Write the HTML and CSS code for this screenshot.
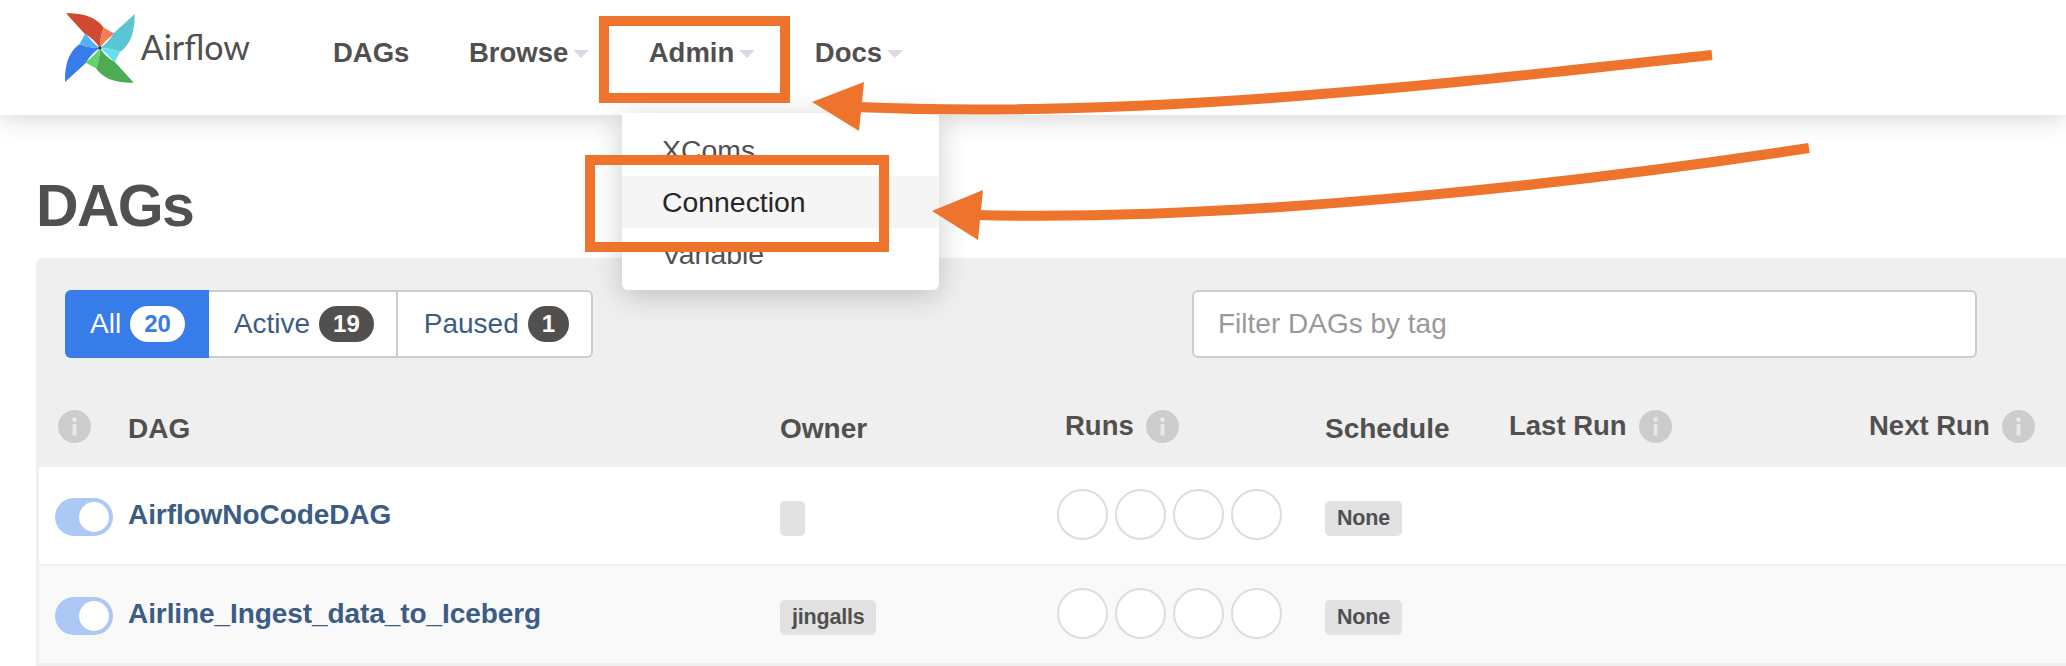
FILE: index.html
```html
<!DOCTYPE html>
<html lang="en">
<head>
  <meta charset="UTF-8" />
  <meta name="viewport" content="width=device-width, initial-scale=1" />
  <title>DAGs - Airflow</title>
  <link rel="stylesheet" href="styles.css">
</head>
<body>
  <svg class="defs" width="0" height="0">
    <symbol id="info" viewBox="0 0 33 33">
      <circle cx="16.5" cy="16.5" r="16.5" fill="#ccc" />
      <circle cx="16.5" cy="9.5" r="2.4" fill="#e8e8e8" />
      <rect x="14.6" y="14" width="3.8" height="11.5" fill="#e8e8e8" />
    </symbol>
  </svg>

  <header class="navbar">
    <a class="brand" href="#">
      <svg class="brand-logo" width="72" height="72" viewBox="0 0 72 72">
        <g>
          <path fill="#d14a2f" d="M1 0C15 0 31 2 40 15C37 22 36 30 36 36C32 30 27 25 20 21Z" />
          <path fill="#ef7e5e" d="M40 15L51 21C45 26 39 31 36 36C36 30 37 22 40 15Z" />
        </g>
        <g transform="rotate(90 36 36)">
          <path fill="#5ac6d3" d="M1 0C15 0 31 2 40 15C37 22 36 30 36 36C32 30 27 25 20 21Z" />
          <path fill="#66e0ee" d="M40 15L51 21C45 26 39 31 36 36C36 30 37 22 40 15Z" />
        </g>
        <g transform="rotate(180 36 36)">
          <path fill="#4dab55" d="M1 0C15 0 31 2 40 15C37 22 36 30 36 36C32 30 27 25 20 21Z" />
          <path fill="#63d46c" d="M40 15L51 21C45 26 39 31 36 36C36 30 37 22 40 15Z" />
        </g>
        <g transform="rotate(270 36 36)">
          <path fill="#377ce8" d="M1 0C15 0 31 2 40 15C37 22 36 30 36 36C32 30 27 25 20 21Z" />
          <path fill="#54b0f8" d="M40 15L51 21C45 26 39 31 36 36C36 30 37 22 40 15Z" />
        </g>
        <circle cx="36" cy="36" r="1.5" fill="#333" />
      </svg>
      <span class="brand-name">Airflow</span>
    </a>
    <nav class="nav-links">
      <a class="nav-link" href="#">DAGs</a>
      <a class="nav-link" href="#">Browse<span class="caret"></span></a>
      <a class="nav-link" href="#">Admin<span class="caret"></span></a>
      <a class="nav-link" href="#">Docs<span class="caret"></span></a>
    </nav>
  </header>

  <ul class="dropdown">
    <li class="dropdown-item">XComs</li>
    <li class="dropdown-item hover">Connection</li>
    <li class="dropdown-item">Variable</li>
  </ul>

  <h1 class="page-title">DAGs</h1>

  <main class="panel">
    <div class="toolbar">
      <div class="btn-group">
        <a class="btn btn-active" href="#">All <span class="badge badge-light">20</span></a>
        <a class="btn" href="#">Active <span class="badge">19</span></a>
        <a class="btn" href="#">Paused <span class="badge">1</span></a>
      </div>
      <div class="tag-filter">Filter DAGs by tag</div>
    </div>

    <div class="table-row table-head">
      <div class="head-icon"><svg class="info" width="33" height="33"><use href="#info" /></svg></div>
      <div>DAG</div>
      <div>Owner</div>
      <div class="head-runs raised">Runs <svg class="info" width="33" height="33"><use href="#info" /></svg></div>
      <div>Schedule</div>
      <div class="raised">Last Run <svg class="info" width="33" height="33"><use href="#info" /></svg></div>
      <div class="raised">Next Run <svg class="info" width="33" height="33"><use href="#info" /></svg></div>
    </div>

    <div class="table-row dag-row">
      <div><span class="toggle"></span></div>
      <div><a class="dag-name" href="#">AirflowNoCodeDAG</a></div>
      <div><span class="label label-empty"></span></div>
      <div class="runs"><span class="run"></span><span class="run"></span><span class="run"></span><span class="run"></span></div>
      <div><span class="label">None</span></div>
      <div></div>
      <div></div>
    </div>

    <div class="table-row dag-row odd">
      <div><span class="toggle"></span></div>
      <div><a class="dag-name" href="#">Airline_Ingest_data_to_Iceberg</a></div>
      <div><span class="label">jingalls</span></div>
      <div class="runs"><span class="run"></span><span class="run"></span><span class="run"></span><span class="run"></span></div>
      <div><span class="label">None</span></div>
      <div></div>
      <div></div>
    </div>
  </main>

  <!-- orange callouts drawn on top of the screenshot -->
  <svg class="callouts" width="2066" height="666" viewBox="0 0 2066 666">
    <rect x="604" y="21" width="181" height="77" fill="none" stroke="#ee742e" stroke-width="10" />
    <rect x="590" y="160" width="294" height="87" fill="none" stroke="#ee742e" stroke-width="10" />
    <path d="M1712 55C1480 80 1150 120 858 107" fill="none" stroke="#ee742e" stroke-width="10" />
    <path d="M812 102L864 82L859 131Z" fill="#ee742e" />
    <path d="M1809 148C1600 180 1250 222 975 215" fill="none" stroke="#ee742e" stroke-width="10" />
    <path d="M932 211L983 190L978 240Z" fill="#ee742e" />
  </svg>
</body>
</html>
```

FILE: styles.css
```css
* {
  box-sizing: border-box;
}
html, body {
  height: 666px;
  overflow: hidden;
}
body {
  margin: 0;
  background: #fff;
  font-family: "Liberation Sans", Arial, sans-serif;
  color: #51504f;
}
a {
  color: inherit;
  text-decoration: none;
}
.defs {
  position: absolute;
}

.navbar {
  position: relative;
  z-index: 2;
  display: flex;
  height: 115px;
  padding-left: 65px;
  background: #fff;
  box-shadow: 0 4px 24px rgba(0, 0, 0, 0.16);
}
.brand {
  display: flex;
  width: 185px;
  height: 72px;
  margin-top: 12px;
  margin-right: 83px;
}
.brand-name {
  margin-left: 6px;
  font-family: Lato, sans-serif;
  font-size: 34px;
  font-weight: 400;
  line-height: 70px;
}
.nav-links {
  display: flex;
  gap: 59.5px;
  margin-top: 37px;
}
.nav-link {
  display: flex;
  height: 31px;
  font-size: 27.5px;
  font-weight: bold;
  line-height: 31px;
}
.caret {
  width: 0;
  height: 0;
  margin-top: 13px;
  margin-left: 5px;
  border-top: 8px solid #e0d6e6;
  border-left: 8px solid transparent;
  border-right: 8px solid transparent;
}

.dropdown {
  position: absolute;
  z-index: 3;
  top: 113px;
  left: 622px;
  width: 317px;
  height: 177px;
  margin: 0;
  padding: 11px 0;
  list-style: none;
  background: #fff;
  border-radius: 0 0 6px 6px;
  box-shadow: 0 6px 30px rgba(0, 0, 0, 0.2);
}
.dropdown-item {
  height: 52px;
  padding-left: 40px;
  font-size: 28.4px;
  line-height: 52px;
}
.dropdown-item.hover {
  background: #f5f5f5;
  color: #262626;
}

.page-title {
  height: 143px;
  margin: 0 0 0 36px;
  padding-top: 58px;
  font-size: 59px;
  letter-spacing: -1.7px;
  line-height: 66px;
}

.panel {
  height: 420px;
  margin-left: 36px;
  padding-left: 3px;
  background: #efefef;
  border-top-left-radius: 6px;
}
.toolbar {
  display: flex;
  gap: 600px;
  padding: 32px 0 32px 26px;
}
.btn-group {
  display: flex;
  width: 527px;
  height: 68px;
}
.btn {
  display: flex;
  align-items: center;
  gap: 9px;
  padding: 0 22px 0 25px;
  font-size: 28px;
  color: #3b5c84;
  background: #fff;
  border: 2px solid #ccc;
  border-left-width: 0;
}
.btn:last-child {
  flex: 1;
  padding-left: 26px;
  border-radius: 0 6px 6px 0;
}
.btn-active {
  padding-right: 24px;
  color: #fff;
  background: #377ce8;
  border: 0;
  border-radius: 6px 0 0 6px;
}
.badge {
  min-width: 40px;
  height: 36px;
  padding: 0 14px;
  font-size: 24px;
  font-weight: bold;
  line-height: 36px;
  text-align: center;
  color: #fff;
  background: #51504f;
  border-radius: 18px;
}
.badge-light {
  color: #377ce8;
  background: #fff;
}
.tag-filter {
  width: 785px;
  height: 68px;
  padding-left: 24px;
  font-size: 28px;
  line-height: 64px;
  color: #999;
  background: #fff;
  border: 2px solid #ccc;
  border-radius: 6px;
}

.table-row {
  display: grid;
  grid-template-columns: 89px 652px 277px 268px 184px 360px 1fr;
}
.table-head {
  height: 77px;
  padding-top: 26px;
  font-size: 28px;
  font-weight: bold;
  line-height: 26px;
}
.head-icon {
  padding-left: 19px;
  margin-top: -6px;
}
.raised {
  display: flex;
  gap: 12px;
  margin-top: -6px;
  height: 33px;
  font-size: 27.5px;
  line-height: 32px;
}
.head-runs {
  padding-left: 8px;
}
.info {
  display: block;
}
.dag-row {
  height: 99px;
  background: #fff;
  border-bottom: 2px solid #f0f0f0;
}
.dag-row.odd {
  background: #f9f9f9;
}
.toggle {
  display: block;
  position: relative;
  width: 58px;
  height: 38px;
  margin: 31px 0 0 16px;
  background: #acc8f4;
  border-radius: 19px;
}
.toggle::after {
  content: "";
  position: absolute;
  top: 4px;
  right: 4px;
  width: 30px;
  height: 30px;
  background: #fff;
  border-radius: 50%;
}
.dag-name {
  display: block;
  margin-top: 32px;
  font-size: 28px;
  font-weight: bold;
  letter-spacing: -0.08px;
  line-height: 32px;
  color: #3b5c84;
}
.label {
  display: inline-block;
  height: 35px;
  margin-top: 34px;
  padding: 0 12px;
  font-size: 21.5px;
  font-weight: bold;
  letter-spacing: -0.2px;
  line-height: 35px;
  background: #e2e2e2;
  border-radius: 5px;
}
.label-empty {
  width: 25px;
}
.runs {
  display: flex;
  gap: 7px;
  padding-top: 22px;
}
.run {
  width: 51px;
  height: 51px;
  background: #fff;
  border: 2px solid #ddd;
  border-radius: 50%;
}

.callouts {
  position: absolute;
  z-index: 4;
  top: 0;
  left: 0;
}
```
